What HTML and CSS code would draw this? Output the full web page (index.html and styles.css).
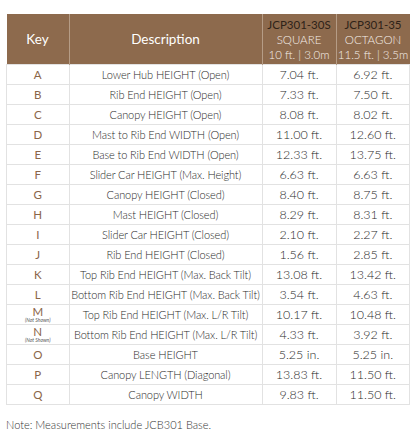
FILE: index.html
```html
<!DOCTYPE html>
<html lang="en">
<head>
  <meta charset="UTF-8">
  <meta name="viewport" content="width=device-width, initial-scale=1.0">
  <title>JCP301 Dimensions</title>
  <link rel="stylesheet" href="styles.css">
</head>
<body>

  <table class="specs">
    <thead>
      <tr>
        <th class="key">Key</th>
        <th class="desc">Description</th>
        <th class="model">
          <span class="model-name">JCP301-30S</span>
          <span>SQUARE</span>
          <span>10 ft. | 3.0m</span>
        </th>
        <th class="model">
          <span class="model-name">JCP301-35</span>
          <span>OCTAGON</span>
          <span>11.5 ft. | 3.5m</span>
        </th>
      </tr>
    </thead>
    <tbody>
      <tr><td class="key">A</td><td>Lower Hub HEIGHT (Open)</td><td>7.04 ft.</td><td>6.92 ft.</td></tr>
      <tr><td class="key">B</td><td>Rib End HEIGHT (Open)</td><td>7.33 ft.</td><td>7.50 ft.</td></tr>
      <tr><td class="key">C</td><td>Canopy HEIGHT (Open)</td><td>8.08 ft.</td><td>8.02 ft.</td></tr>
      <tr><td class="key">D</td><td>Mast to Rib End WIDTH (Open)</td><td>11.00 ft.</td><td>12.60 ft.</td></tr>
      <tr><td class="key">E</td><td>Base to Rib End WIDTH (Open)</td><td>12.33 ft.</td><td>13.75 ft.</td></tr>
      <tr><td class="key">F</td><td>Slider Car HEIGHT (Max. Height)</td><td>6.63 ft.</td><td>6.63 ft.</td></tr>
      <tr><td class="key">G</td><td>Canopy HEIGHT (Closed)</td><td>8.40 ft.</td><td>8.75 ft.</td></tr>
      <tr><td class="key">H</td><td>Mast HEIGHT (Closed)</td><td>8.29 ft.</td><td>8.31 ft.</td></tr>
      <tr><td class="key">I</td><td>Slider Car HEIGHT (Closed)</td><td>2.10 ft.</td><td>2.27 ft.</td></tr>
      <tr><td class="key">J</td><td>Rib End HEIGHT (Closed)</td><td>1.56 ft.</td><td>2.85 ft.</td></tr>
      <tr><td class="key">K</td><td>Top Rib End HEIGHT (Max. Back Tilt)</td><td>13.08 ft.</td><td>13.42 ft.</td></tr>
      <tr><td class="key">L</td><td>Bottom Rib End HEIGHT (Max. Back Tilt)</td><td>3.54 ft.</td><td>4.63 ft.</td></tr>
      <tr><td class="key">M<small>(Not Shown)</small></td><td>Top Rib End HEIGHT (Max. L/R Tilt)</td><td>10.17 ft.</td><td>10.48 ft.</td></tr>
      <tr><td class="key">N<small>(Not Shown)</small></td><td>Bottom Rib End HEIGHT (Max. L/R Tilt)</td><td>4.33 ft.</td><td>3.92 ft.</td></tr>
      <tr><td class="key">O</td><td>Base HEIGHT</td><td>5.25 in.</td><td>5.25 in.</td></tr>
      <tr><td class="key">P</td><td>Canopy LENGTH (Diagonal)</td><td>13.83 ft.</td><td>11.50 ft.</td></tr>
      <tr><td class="key">Q</td><td>Canopy WIDTH</td><td>9.83 ft.</td><td>11.50 ft.</td></tr>
    </tbody>
  </table>

  <p class="note">Note: Measurements include JCB301 Base.</p>

</body>
</html>
```

FILE: styles.css
```css
body {
  margin: 0;
  padding: 14px 8px 0 6px;
  font-family: Lato, "Noto Sans", sans-serif;
  color: #3a3a3a;
  background: #fff;
}
.specs {
  width: 400px;
  border-collapse: collapse;
  table-layout: fixed;
}
.specs th {
  background: #8d6a4d;
  color: #fff;
  font-weight: normal;
  font-size: 13.5px;
  height: 50px;
  padding: 0;
  border-left: 1px solid #b59c86;
  white-space: nowrap;
}
.specs th:first-child {
  border-left: none;
}
.specs th.key {
  width: 62px;
}
.specs th.desc {
  width: 192px;
}
.specs th.model {
  width: 73px;
  font-size: 11.5px;
  line-height: 15px;
  font-weight: 300;
  color: #f6efe9;
}
.model span {
  display: block;
}
.model .model-name {
  color: #2e2218;
  font-weight: normal;
}
.specs td {
  height: 19px;
  padding: 0;
  border: 1px solid #e2e2e2;
  text-align: center;
  font-size: 11px;
  font-weight: 300;
  color: #2a2a2a;
  line-height: 13px;
  letter-spacing: -0.1px;
  white-space: nowrap;
  overflow: hidden;
}
.specs td:nth-child(3),
.specs td:nth-child(4) {
  font-size: 12.5px;
  letter-spacing: 0;
}
.specs td.key {
  color: #8a6548;
  font-size: 11.5px;
  font-weight: normal;
  line-height: 11px;
  letter-spacing: 0;
}
.specs td.key small {
  display: block;
  font-size: 5px;
  line-height: 7px;
  font-style: italic;
  color: #555;
}
.note {
  margin: 13px 0 0;
  font-size: 11px;
  font-weight: 300;
  color: #333;
}
```
